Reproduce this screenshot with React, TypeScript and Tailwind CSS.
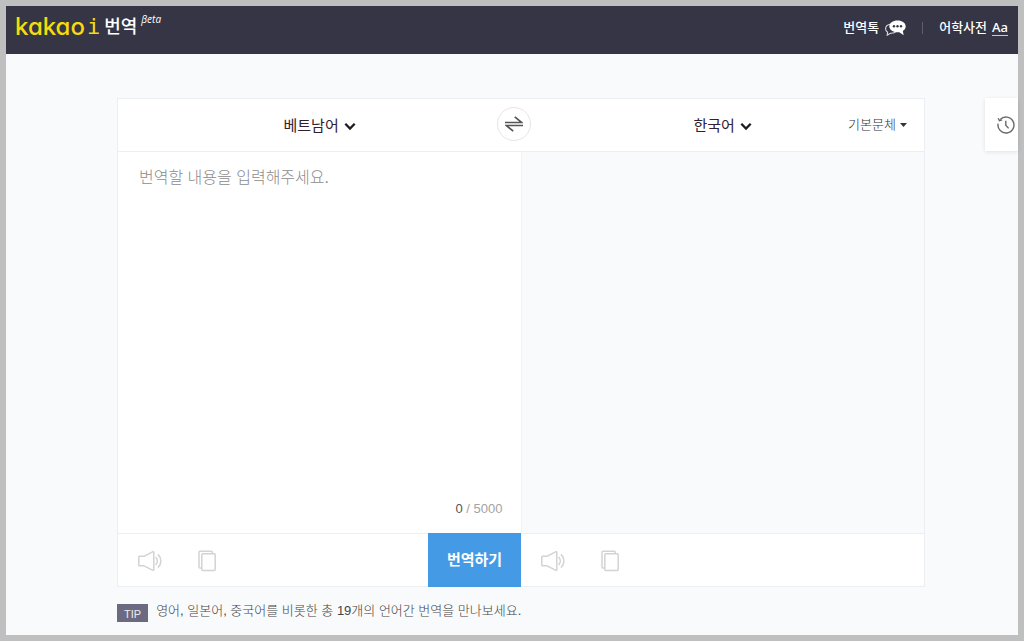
import { FC, ReactNode, useState } from 'react';

const MAX_LENGTH = 5000;

const ChevronIcon: FC = () => (
  <svg width="12" height="9" viewBox="0 0 12 9" fill="none" aria-hidden="true">
    <path d="M1.3 1.8 6 6.5l4.7-4.7" stroke="#1c1c22" strokeWidth="2.3" />
  </svg>
);

const SpeakerIcon: FC = () => (
  <svg width="24" height="22" viewBox="0 0 24 22" fill="none" stroke="#d3d3d3" strokeWidth="1.5" strokeLinejoin="round" aria-hidden="true">
    <path d="M1.500 6.300H6L15 1.700a.6.6 0 0 1 .8.6v17.400a.6.6 0 0 1-.8.6L6 15.800H1.500a.7.7 0 0 1-.7-.7V7a.7.7 0 0 1 .7-.7z" />
    <path d="M18 7.600c1.700 1.900 1.700 4.900 0 6.800M20.300 4.900c3.500 3.300 3.500 8.900 0 12.200" strokeLinecap="round" />
  </svg>
);

const CopyIcon: FC = () => (
  <svg width="18" height="22" viewBox="0 0 18 22" fill="none" stroke="#d3d3d3" strokeWidth="1.5" strokeLinejoin="round" aria-hidden="true">
    <path d="M3.700 18H2a1 1 0 0 1-1-1V2.200a1 1 0 0 1 1-1h11.300a1 1 0 0 1 1 1v1.300" />
    <rect x="3.800" y="3.700" width="13.400" height="16.800" rx="1" />
  </svg>
);

const SwapIcon: FC = () => (
  <svg width="18" height="16" viewBox="0 0 18 16" fill="none" stroke="#555" strokeWidth="1.7" aria-hidden="true">
    <path d="M0 6.500h16.800L9.800.8M18 9.500H1.200l7 5.700" />
  </svg>
);

const HistoryIcon: FC = () => (
  <svg width="18" height="18" viewBox="0 0 18 18" fill="none" stroke="#6a6a6a" strokeWidth="1.4" aria-hidden="true">
    <path d="M3.200 3.500A8 8 0 1 1 1.100 7.600" />
    <path d="M1.200 2.200 2.400 4.600l2.800-.8" />
    <path d="M8.800 4.800v4.400l2.800 3.200" />
  </svg>
);

const TalkIcon: FC = () => (
  <svg width="21" height="16" viewBox="0 0 21 16" aria-hidden="true">
    <path d="M5 4.200C2.200 4.800.6 6.600.6 8.700c0 1.500.8 2.700 2 3.500l-.4 3 3.200-2c2.500.2 4.600-.5 5.800-1.900" fill="none" stroke="#d9d9df" strokeWidth="1.1" />
    <path d="M12.500.4c4.700 0 8.200 2.600 8.200 5.900 0 2-1.100 3.600-2.900 4.700l.9 4.200-4.400-3c-.6.1-1.200.1-1.800.1-4.700 0-8.200-2.600-8.200-6S7.800.4 12.500.4z" fill="#fff" />
    <g fill="#353545">
      <circle cx="9" cy="6.200" r="1.200" />
      <circle cx="12.500" cy="6.200" r="1.200" />
      <circle cx="16" cy="6.200" r="1.200" />
    </g>
  </svg>
);

interface LanguageSelectProps {
  label: string;
  value: string;
}

const LanguageSelect: FC<LanguageSelectProps> = ({ label, value }) => (
  <div className="flex items-center gap-1">
    <select
      aria-label={label}
      className="h-8 appearance-none bg-transparent text-[15px] leading-8 text-[#33202f] outline-none"
    >
      <option>{value}</option>
    </select>
    <ChevronIcon />
  </div>
);

const PanelTools: FC<{ name: string; children?: ReactNode }> = ({ name, children }) => (
  <div className="flex flex-1 items-center pt-px pl-5">
    <button type="button" aria-label={`${name} 듣기`}>
      <SpeakerIcon />
    </button>
    <button type="button" aria-label={`${name} 복사`} className="ml-9">
      <CopyIcon />
    </button>
    {children}
  </div>
);

const Header: FC = () => (
  <header className="flex h-12 items-center justify-between bg-[#353545] px-2.5 pb-1.5 text-white">
    <a href="#" className="-ml-px flex items-center">
      <span className="font-['Inter',sans-serif] text-2xl leading-8 font-medium text-[#f5dc0c] [font-feature-settings:'cv11']">
        kakao
      </span>
      <span className="ml-0.5 font-['DejaVu_Sans_Mono',monospace] text-[22px] leading-8 text-[#f5dc0c]">i</span>
      <span className="ml-1 text-lg leading-8 font-medium">번역</span>
      <span className="ml-1 self-start font-['Open_Sans',sans-serif] text-[10px] leading-4 italic">βeta</span>
    </a>
    <nav className="flex items-center pt-px text-[13px] font-medium">
      <a href="#" className="flex items-center gap-1.5">
        번역톡
        <TalkIcon />
      </a>
      <span className="mx-4 h-3 w-px bg-[#5d5d6b]" />
      <a href="#" className="flex items-center gap-[5px]">
        어학사전
        <span className="border-b border-[#c9c9d0] font-['Noto_Sans',sans-serif] leading-4">Aa</span>
      </a>
    </nav>
  </header>
);

export default function App() {
  const [text, setText] = useState('');

  return (
    <div className="flex min-h-screen flex-col bg-[#bfbfbf] p-1.5 font-['Liberation_Sans','Noto_Sans_CJK_KR',sans-serif]">
      <Header />

      <div className="flex flex-1 items-start bg-[#f9fafc] pt-11 pl-[111px]">
        <main className="flex-1">
          <div className="border border-[#eceef2] bg-white">
            {/* Language bar */}
            <div className="relative flex h-[53px] border-b border-[#eceef2]">
              <div className="flex flex-1 items-center justify-center pt-0.5">
                <LanguageSelect label="출발 언어" value="베트남어" />
              </div>
              <button
                type="button"
                aria-label="언어 바꾸기"
                className="absolute top-2 left-1/2 -ml-6 flex size-[34px] items-center justify-center rounded-full border border-[#e6e6e8] bg-white"
              >
                <SwapIcon />
              </button>
              <div className="relative flex flex-1 items-center justify-center pt-0.5">
                <LanguageSelect label="도착 언어" value="한국어" />
                <div className="absolute top-2.5 right-[17px] flex items-center gap-1">
                  <select
                    aria-label="문체"
                    className="h-8 appearance-none bg-transparent text-[13px] leading-8 font-light text-[#333] outline-none"
                  >
                    <option>기본문체</option>
                  </select>
                  <svg width="7" height="4" viewBox="0 0 7 4" aria-hidden="true">
                    <path d="M0 0h7L3.500 4z" fill="#333" />
                  </svg>
                </div>
              </div>
            </div>

            {/* Source and result */}
            <div className="flex h-[381px]">
              <div className="flex flex-1 flex-col">
                <textarea
                  aria-label="번역할 내용"
                  placeholder="번역할 내용을 입력해주세요."
                  maxLength={MAX_LENGTH}
                  value={text}
                  onChange={(e) => setText(e.target.value)}
                  className="w-full flex-1 resize-none px-[21px] pt-3 text-base leading-7 font-light outline-none placeholder:text-[#8c8c8c]"
                />
                <p className="pr-[18px] pb-3.5 text-right text-[13px] leading-5 text-[#a3a3a3]">
                  <span className="text-[#555]">{text.length}</span> / {MAX_LENGTH}
                </p>
              </div>
              <output className="block flex-1 border-l border-[#f3f4f6] bg-[#f9fafb]" />
            </div>

            {/* Tools */}
            <div className="flex h-[53px] border-t border-[#eceef2]">
              <PanelTools name="원문">
                <button type="button" className="-mt-0.5 -mb-px ml-auto h-[54px] w-[93px] bg-[#459ae5] text-[15px] font-bold text-white">
                  번역하기
                </button>
              </PanelTools>
              <PanelTools name="번역문" />
            </div>
          </div>

          <p className="mt-3 flex items-center gap-2 text-[13px] leading-6 font-light text-[#444]">
            <span className="mt-1 bg-[#6b6a80] px-[7px] pt-0.5 text-[11px] leading-4 font-normal text-[#ececf2]">
              TIP
            </span>
            영어, 일본어, 중국어를 비롯한 총 19개의 언어간 번역을 만나보세요.
          </p>
        </main>

        <button
          type="button"
          aria-label="번역 기록"
          className="ml-[60px] flex h-[53px] w-[33px] items-center justify-end bg-white pr-[3px] shadow-[0_1px_4px_rgba(0,0,0,0.1)]"
        >
          <HistoryIcon />
        </button>
      </div>
    </div>
  );
}
